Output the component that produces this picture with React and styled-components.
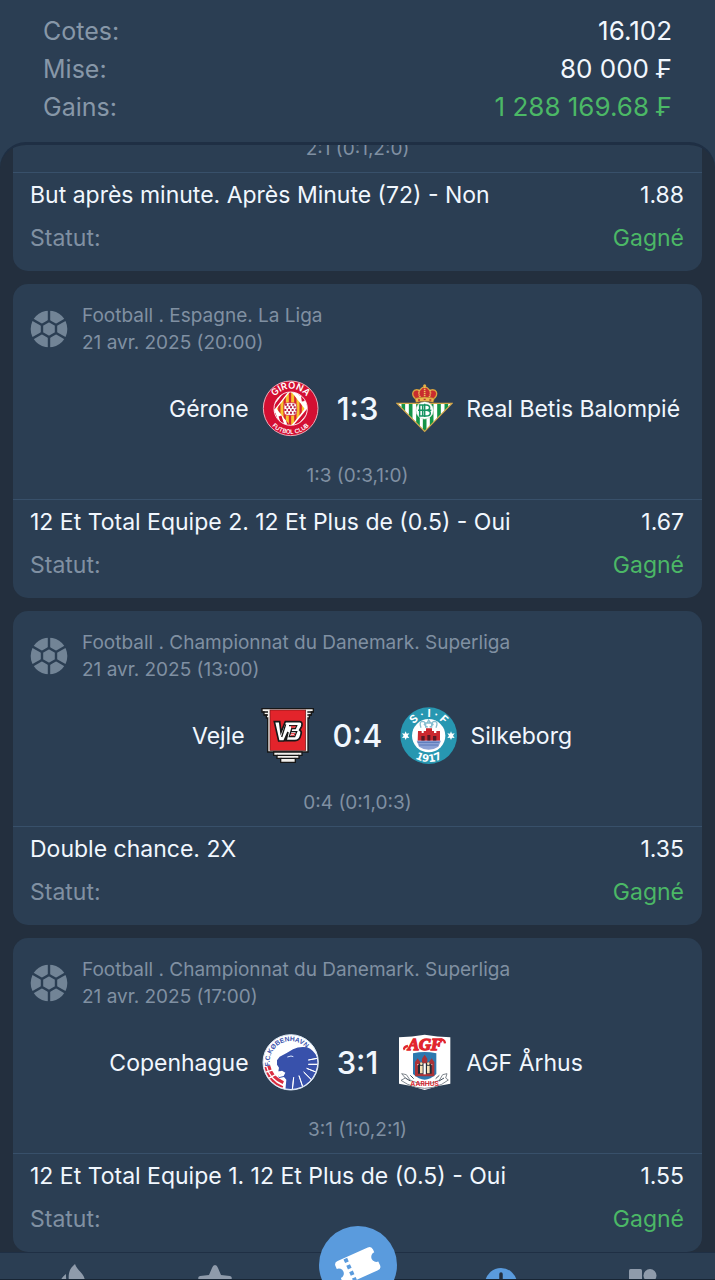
import React from "react";
import styled, { createGlobalStyle } from "styled-components";

const color = {
  surface: "#2b3e53",
  back: "#232f3e",
  edge: "#1f2f44",
  line: "#38506a",
  text: "#f1f7fe",
  muted: "#8797a8",
  dim: "#8090a2",
  win: "#4bb866",
  accent: "#5a9bdd",
  icon: "#8f9bab",
};

const GlobalStyle = createGlobalStyle`
  * { box-sizing: border-box; }
  body {
    margin: 0;
    background: ${color.surface};
    color: ${color.text};
    font-family: Inter, "Liberation Sans", sans-serif;
  }
  p, dl, dt, dd { margin: 0; }
`;

const Screen = styled.div`
  display: flex;
  flex-direction: column;
  height: 100vh;
  overflow: hidden;
`;

const Summary = styled.dl`
  flex: none;
  padding: 12px 43px 16px;
  font-size: 25px;
  line-height: 38px;
`;

const SummaryRow = styled.div`
  display: flex;
  justify-content: space-between;
  dt { color: ${color.muted}; }
  dd {
    color: ${(p) => (p.$win ? color.win : color.text)};
    font-size: 26px;
    font-weight: 400;
  }
`;

const List = styled.main`
  flex: 1;
  min-height: 0;
  overflow: hidden;
  display: flex;
  flex-direction: column;
  gap: 13px;
  padding: 0 13px;
  background: ${color.back};
  border-top: 3px solid ${color.edge};
  border-radius: 26px 26px 0 0;
`;

const Card = styled.article`
  flex: none;
  overflow: hidden;
  background: ${color.surface};
  border-radius: ${(p) => (p.$scrolled ? "0 0 15px 15px" : "15px")};
  padding: ${(p) => (p.$scrolled ? "0 0 11px" : "18px 0 11px")};
`;

const Meta = styled.header`
  display: flex;
  align-items: center;
  gap: 14px;
  padding: 0 17px;
  font-size: 19px;
  line-height: 27px;
  color: ${color.dim};
`;

const Teams = styled.div`
  display: grid;
  grid-template-columns: 1fr auto 1fr;
  align-items: center;
  gap: 18px;
  height: 56px;
  margin: 24px 17px 27px;
`;

const Team = styled.div`
  display: flex;
  flex-direction: ${(p) => (p.$home ? "row-reverse" : "row")};
  align-items: center;
  gap: 13px;
  min-width: 0;
  font-size: 23px;
  white-space: nowrap;
  svg { flex: none; }
`;

const Score = styled.strong`
  font-size: 31px;
  font-weight: 500;
`;

const Periods = styled.p`
  height: 37px;
  margin-top: ${(p) => (p.$scrolled ? "-9px" : "0")};
  margin-bottom: 1px;
  border-bottom: 1px solid ${color.line};
  text-align: center;
  font-size: 19px;
  line-height: 26px;
  color: ${color.dim};
`;

const BetRow = styled.div`
  display: flex;
  justify-content: space-between;
  padding: 0 18px 0 17px;
  font-size: 23px;
  line-height: 43px;
`;

const StatusLabel = styled.span`
  color: ${color.dim};
`;

const Status = styled.span`
  color: ${color.win};
`;

const Nav = styled.nav`
  position: relative;
  flex: none;
  display: grid;
  grid-template-columns: repeat(5, 1fr);
  height: 28px;
  background: ${color.surface};
  border-top: 1px solid ${color.edge};
  border-bottom: 1px solid #182534;
`;

const NavButton = styled.button`
  display: flex;
  justify-content: center;
  align-items: flex-start;
  height: 26px;
  padding: 0;
  border: 0;
  background: none;
  overflow: hidden;
`;

const TicketButton = styled.button`
  position: absolute;
  left: 50%;
  top: -27px;
  width: 78px;
  height: 78px;
  margin-left: -39px;
  padding: 0;
  border: 0;
  border-radius: 50%;
  background: ${color.accent};
`;

function Ball() {
  const pts = [[0, -8], [7, -4], [7, 4], [0, 8], [-7, 4], [-7, -4]];
  return (
    <svg width="38" height="38" viewBox="-19 -19 38 38" aria-hidden="true">
      <circle r="18.3" fill="#728496" />
      <g stroke={color.surface} strokeWidth="2.4" fill="none">
        <polygon points={pts.join(" ")} />
        {pts.map(([x, y]) => (
          <line key={`${x},${y}`} x1={x} y1={y} x2={x * 2.6} y2={y * 2.6} />
        ))}
      </g>
    </svg>
  );
}

function Crest({ children, label }) {
  return (
    <svg width="57" height="57" viewBox="0 0 171 171" role="img" aria-label={label}>
      {children}
    </svg>
  );
}

function Girona() {
  return (
    <Crest label="Gérone">
      <defs>
        <path id="gi-top" d="M28 84A58 58 0 0 1 144 84" />
        <path id="gi-bot" d="M10 86A76 76 0 0 0 162 86" />
        <clipPath id="gi-in"><circle cx="86" cy="86" r="50" /></clipPath>
        <clipPath id="gi-dia"><path d="M86 33L128 86L86 139L44 86Z" /></clipPath>
      </defs>
      <circle cx="86" cy="85" r="82" fill="#d40f32" stroke="#f0a9b5" strokeWidth="3" />
      <g clipPath="url(#gi-in)">
        <circle cx="86" cy="86" r="50" fill="#fff" />
        <g stroke="#d40f32" strokeWidth="9">
          <path d="M30 60L60 20M34 86L82 24M90 148L150 76M110 150L150 104M100 20L116 44M118 26L124 64M130 44L140 74M36 100L50 140M54 108L66 146M76 118L84 150" />
        </g>
        <g clipPath="url(#gi-dia)">
          <rect width="171" height="171" fill="#f6c22d" />
          <path d="M52 20V150M68 20V150M84 20V150M100 20V150M116 20V150" stroke="#d8232f" strokeWidth="7" />
        </g>
      </g>
      <circle cx="86" cy="86" r="50" fill="none" stroke="#fff" strokeWidth="2.5" />
      <rect x="66" y="68" width="38" height="38" rx="10" fill="#fff" stroke="#d8232f" strokeWidth="2" />
      <path d="M69 74H102M67 90H104" stroke="#b3234a" strokeWidth="6" strokeDasharray="6 5" />
      <path d="M73 82H102M73 98H102" stroke="#b3234a" strokeWidth="6" strokeDasharray="6 5" />
      <g fill="#fff" fontFamily="Inter, sans-serif" fontWeight="600">
        <text fontSize="28" textAnchor="middle"><textPath href="#gi-top" startOffset="50%">GIRONA</textPath></text>
        <text fontSize="18" textAnchor="middle"><textPath href="#gi-bot" startOffset="50%">FUTBOL CLUB</textPath></text>
      </g>
    </Crest>
  );
}

function Betis() {
  return (
    <Crest label="Real Betis Balompié">
      <defs><clipPath id="be-tri"><path d="M3 70H168L86 154Z" /></clipPath></defs>
      <g clipPath="url(#be-tri)">
        <rect width="171" height="171" fill="#fff" />
        <path d="M22 60V160M44 60V160M66 60V160M86 60V160M107 60V160M129 60V160M151 60V160" stroke="#159447" strokeWidth="11" />
      </g>
      <path d="M3 70H168L86 154Z" fill="none" stroke="#d2a548" strokeWidth="3.5" />
      <circle cx="86" cy="91" r="26" fill="#fff" stroke="#cfe5cf" strokeWidth="2" />
      <g fill="none" stroke="#159461" strokeWidth="4.5">
        <path d="M86 71V111M71 75H91Q101 76 101 83Q101 90 91 91H71ZM71 91H91Q103 92 103 100Q102 108 91 108H71ZM80 75V108M66 91H106" />
      </g>
      <path d="M60 58C42 42 51 24 71 31Q86 10 101 31C122 24 130 42 112 58Z" fill="#c92c2f" stroke="#d8a440" strokeWidth="4" />
      <path d="M86 21V56M70 31Q66 43 75 57M102 31Q106 43 97 57" fill="none" stroke="#efc15b" strokeWidth="5" strokeDasharray="4 2" />
      <path d="M57 55Q86 47 115 55L112 67Q86 60 60 67Z" fill="#eab64c" stroke="#a06a28" strokeWidth="1.5" />
      <circle cx="86" cy="17" r="4.5" fill="#e5ae47" />
      <path d="M66 60H72M83 58H89M100 60H106" stroke="#bd2b33" strokeWidth="4" />
    </Crest>
  );
}

function Vejle() {
  return (
    <Crest label="Vejle">
      <g fill="#f3f0ec" stroke="#171717" strokeWidth="4">
        <path d="M12 5H166V15H160V24H154V33H150V135H29V33H25V24H18V15H12Z" />
        <path d="M47 135H132V145H123V154H112V166H68V154H57V145H47Z" />
      </g>
      <path d="M14 15H30M19 24H30M148 15H165M148 24H159M57 145H123M68 154H112" stroke="#171717" strokeWidth="4" />
      <rect x="36" y="9" width="107" height="121" fill="#e3242b" stroke="#6e1517" strokeWidth="2" />
      <path d="M49 44H65L69 76L82 44H125Q135 45 131 58L125 69Q132 73 129 82Q125 101 111 101H84L90 75L78 102H62Z" fill="#fff" stroke="#171717" strokeWidth="5" />
      <path d="M93 56H116L112 65H101L99 74H116L110 89H94L101 66M83 52L71 90" fill="none" stroke="#171717" strokeWidth="4" />
      <path d="M99 58H113L109 62H99M99 80H111L108 85H98" stroke="#df252b" strokeWidth="3" fill="none" />
    </Crest>
  );
}

function Silkeborg() {
  return (
    <Crest label="Silkeborg">
      <defs>
        <path id="si-top" d="M30 86A56 56 0 0 1 142 86" />
        <path id="si-bot" d="M7 86A79 79 0 0 0 165 86" />
      </defs>
      <circle cx="86" cy="86" r="85" fill="#2797b1" />
      <circle cx="86" cy="86" r="50" fill="#fff" />
      <path d="M63 62Q56 43 68 43Q78 45 73 53L83 61M108 62Q116 43 103 43Q94 45 99 53L89 61M77 62V48H95V62M82 47L86 39L91 47" fill="none" stroke="#86bed0" strokeWidth="4" />
      <path d="M54 72H65V78H71V72H78V64H96V72H102V78H109V72H120V101H53Z" fill="#cb282f" />
      <path d="M64 87H74V101H64ZM99 87H109V101H99ZM82 84H91V101H82Z" fill="#571a25" />
      <path d="M50 101H123L115 119Q86 138 57 119Z" fill="#8ba1d5" />
      <path d="M53 106H118M57 114H115" stroke="#5878b9" strokeWidth="3" />
      <g fill="#fff">
        <path id="si-star" d="M17 73L20 80L28 79L23 86L28 93L20 92L17 99L14 92L6 93L11 86L6 79L14 80Z" />
        <use href="#si-star" x="136" />
      </g>
      <g fill="#fff" fontWeight="700" textAnchor="middle">
        <text fontFamily="Inter, sans-serif" fontSize="33"><textPath href="#si-top" startOffset="50%">S · I · F</textPath></text>
        <text fontFamily="DejaVu Sans, sans-serif" fontSize="31"><textPath href="#si-bot" startOffset="50%">1917</textPath></text>
      </g>
    </Crest>
  );
}

function Copenhagen() {
  return (
    <Crest label="Copenhague">
      <defs>
        <path id="ko-arc" d="M27 108A63 63 0 0 1 140 53" />
        <clipPath id="ko-clip"><circle cx="86" cy="85" r="80" /></clipPath>
      </defs>
      <circle cx="86" cy="85" r="83" fill="#fff" stroke="#dae7f7" strokeWidth="3" />
      <g clipPath="url(#ko-clip)">
        <path d="M45 79L53 68L74 57L93 46Q113 36 135 40Q157 48 171 79V116L137 160L105 169H70L73 137L66 129L51 132L48 125L60 119L58 113L49 112L51 101L45 92Z" fill="#3851ab" />
        <path d="M171 72L139 78ZM171 91L139 91ZM164 115L134 103ZM150 139L125 114ZM124 164L111 125ZM91 167L95 130Z" stroke="#fff" strokeWidth="3" fill="#fff" />
        <path d="M49 113L60 110L70 116L65 126L50 130L48 123L60 119Z" fill="#fff" />
        <path d="M76 69L87 66L94 68" stroke="#dce7ff" strokeWidth="3" fill="none" />
        <path d="M8 99Q18 142 62 161M20 95Q27 130 64 146" fill="none" stroke="#d92d41" strokeWidth="9" />
        <path d="M3 117L37 106M13 137L46 119" stroke="#fff" strokeWidth="4" />
      </g>
      <text fill="#3851ab" fontFamily="Liberation Sans, sans-serif" fontWeight="700" fontSize="20" textAnchor="middle">
        <textPath href="#ko-arc" startOffset="50%">F.C.KØBENHAVN</textPath>
      </text>
    </Crest>
  );
}

function Aarhus() {
  return (
    <Crest label="AGF Århus">
      <path d="M9 10Q48 8 86 2Q124 8 163 10V149Q124 154 86 168Q48 154 9 149Z" fill="#fff" />
      <text x="87" y="49" fill="#e1252d" stroke="#e1252d" strokeWidth="4" fontFamily="Liberation Serif, serif" fontStyle="italic" fontWeight="700" fontSize="50" textAnchor="middle">AGF</text>
      <path d="M26 47Q20 40 36 36M128 18Q146 13 147 28" fill="none" stroke="#e1252d" strokeWidth="7" />
      <path d="M51 58Q86 50 121 58V120Q103 137 86 137Q69 137 51 120Z" fill="#2d78af" />
      <path d="M57 84L65 73L73 84V91H78V74L86 62L94 74V91H99V84L107 73L115 84V127H57Z" fill="#a93237" />
      <path d="M63 92H69M103 92H109" stroke="#e4adaa" strokeWidth="4" />
      <path d="M66 119V93L77 83L86 90L97 83L107 93V119Z" fill="#222c37" />
      <circle cx="76" cy="89" r="4" fill="#f5dfb4" />
      <circle cx="97" cy="89" r="4" fill="#f5dfb4" />
      <path d="M76 95V118M97 95V118" stroke="#f5dfb4" strokeWidth="8" />
      <path d="M86 88V121" stroke="#fff" strokeWidth="7" />
      <path d="M17 119L31 122L43 139Q86 160 130 139L140 122L153 119L149 132L157 138L137 151Q86 175 35 151L15 139L28 132Z" fill="#fff" stroke="#677078" strokeWidth="2.5" />
      <path d="M43 124L53 134M130 124L119 134M28 132L43 141M144 132L129 141" stroke="#3f4c59" strokeWidth="3" />
      <text x="86" y="157" fill="#d92e35" fontFamily="Inter, sans-serif" fontWeight="700" fontSize="20" textAnchor="middle">AARHUS</text>
    </Crest>
  );
}

const matches = [
  {
    periods: "2:1 (0:1,2:0)", scrolled: true,
    bet: "But après minute. Après Minute (72) - Non", odd: "1.88",
  },
  {
    league: "Football . Espagne. La Liga", date: "21 avr. 2025 (20:00)",
    home: "Gérone", away: "Real Betis Balompié", HomeCrest: Girona, AwayCrest: Betis,
    score: "1:3", periods: "1:3 (0:3,1:0)",
    bet: "12 Et Total Equipe 2. 12 Et Plus de (0.5) - Oui", odd: "1.67",
  },
  {
    league: "Football . Championnat du Danemark. Superliga", date: "21 avr. 2025 (13:00)",
    home: "Vejle", away: "Silkeborg", HomeCrest: Vejle, AwayCrest: Silkeborg,
    score: "0:4", periods: "0:4 (0:1,0:3)",
    bet: "Double chance. 2X", odd: "1.35",
  },
  {
    league: "Football . Championnat du Danemark. Superliga", date: "21 avr. 2025 (17:00)",
    home: "Copenhague", away: "AGF Århus", HomeCrest: Copenhagen, AwayCrest: Aarhus,
    score: "3:1", periods: "3:1 (1:0,2:1)",
    bet: "12 Et Total Equipe 1. 12 Et Plus de (0.5) - Oui", odd: "1.55",
  },
];

function MatchCard({ league, date, home, away, HomeCrest, AwayCrest, score, periods, bet, odd, scrolled }) {
  return (
    <Card $scrolled={scrolled}>
      {league && (
        <Meta>
          <Ball />
          <div>
            <p>{league}</p>
            <p>{date}</p>
          </div>
        </Meta>
      )}
      {home && (
        <Teams>
          <Team $home><HomeCrest /><span>{home}</span></Team>
          <Score>{score}</Score>
          <Team><AwayCrest /><span>{away}</span></Team>
        </Teams>
      )}
      <Periods $scrolled={scrolled}>{periods}</Periods>
      <BetRow><span>{bet}</span><span>{odd}</span></BetRow>
      <BetRow><StatusLabel>Statut:</StatusLabel><Status>Gagné</Status></BetRow>
    </Card>
  );
}

export default function App() {
  return (
    <>
      <GlobalStyle />
      <Screen>
        <Summary>
          <SummaryRow><dt>Cotes:</dt><dd>16.102</dd></SummaryRow>
          <SummaryRow><dt>Mise:</dt><dd>80 000 ₣</dd></SummaryRow>
          <SummaryRow $win><dt>Gains:</dt><dd>1 288 169.68 ₣</dd></SummaryRow>
        </Summary>
        <List>
          {matches.map((m) => <MatchCard key={m.bet + m.odd} {...m} />)}
        </List>
        <Nav>
          <NavButton aria-label="Populaire">
            <svg width="40" height="40" viewBox="0 0 40 40" fill={color.icon}>
              <path d="M23 11C17 16 16 21 17 29H33C33 20 25 18 23 11Z" />
              <path d="M14 21C10 24 8 27 8 32H16C14 28 14 25 14 21Z" />
            </svg>
          </NavButton>
          <NavButton aria-label="Favoris">
            <svg width="40" height="40" viewBox="0 0 40 40" fill={color.icon}>
              <path d="M20 12Q22 12 23 15L26 22L35 23Q38 24 36 27L29 33V40H11V33L4 27Q2 24 5 23L14 22L17 15Q18 12 20 12Z" />
            </svg>
          </NavButton>
          <span />
          <NavButton aria-label="Historique">
            <svg width="40" height="40" viewBox="0 0 40 40">
              <circle cx="20" cy="31" r="16" fill={color.accent} />
              <path d="M20 21V33" stroke={color.back} strokeWidth="3.5" strokeLinecap="round" />
            </svg>
          </NavButton>
          <NavButton aria-label="Menu">
            <svg width="40" height="40" viewBox="0 0 40 40" fill={color.icon}>
              <rect x="5" y="16" width="13" height="13" rx="1.5" />
              <circle cx="26" cy="22.5" r="6.5" />
            </svg>
          </NavButton>
          <TicketButton aria-label="Coupon">
            <svg width="78" height="78" viewBox="0 0 78 78">
              <g transform="rotate(-24 39 39)">
                <path d="M22 27H55Q59 27 59 31V34A5 5 0 0 0 59 44V48Q59 52 55 52H22Q18 52 18 48V44A5 5 0 0 0 18 34V31Q18 27 22 27Z" fill="#fff" />
                <path d="M30 28V52" stroke={color.accent} strokeWidth="4" strokeDasharray="4 3" />
              </g>
            </svg>
          </TicketButton>
        </Nav>
      </Screen>
    </>
  );
}
